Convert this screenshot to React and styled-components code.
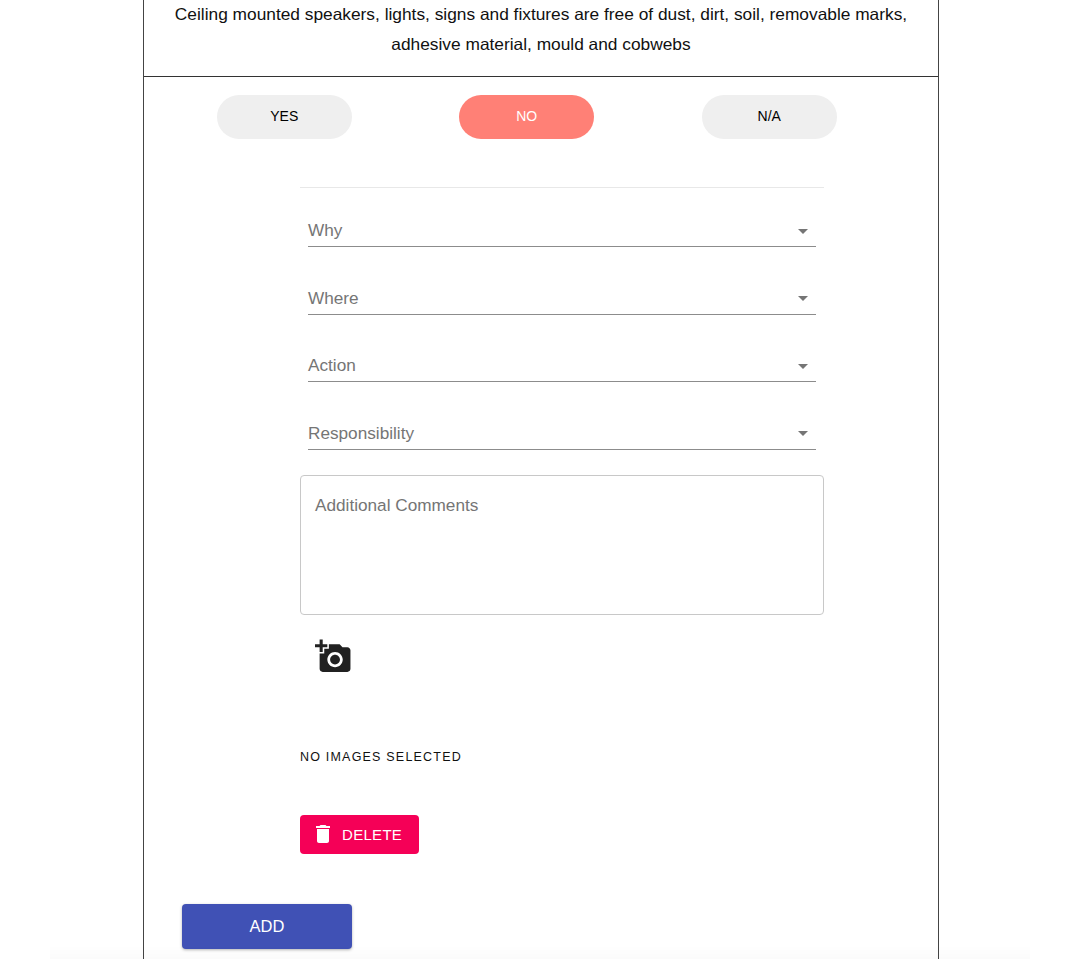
import React from 'react';
import styled, { createGlobalStyle } from 'styled-components';

const GlobalStyle = createGlobalStyle`
  html, body {
    margin: 0;
    padding: 0;
    background: #fff;
  }
  body {
    font-family: "Liberation Sans", Arial, sans-serif;
    overflow: hidden;
  }
`;

const Page = styled.div`
  height: 959px;
  padding-left: 143px;
  box-sizing: border-box;
  overflow: hidden;
`;

const Panel = styled.div`
  width: 796px;
  height: 959px;
  box-sizing: border-box;
  border-left: 1px solid #444;
  border-right: 1px solid #444;
`;

const Question = styled.div`
  height: 77px;
  box-sizing: border-box;
  border-bottom: 1px solid #333;
  text-align: center;
  font-size: 17.32px;
  line-height: 29.5px;
  color: #111;
  padding: 0 28px;
`;

const Choices = styled.div`
  display: grid;
  grid-template-columns: repeat(3, 242.5px);
  justify-items: center;
  margin: 18px 0 0 19px;
`;

const Choice = styled.button`
  width: 135px;
  height: 44px;
  border: 0;
  border-radius: 22px;
  background: ${p => (p.$active ? '#ff8076' : '#efefef')};
  color: ${p => (p.$active ? '#fff' : '#000')};
  font-family: "Liberation Sans", Arial, sans-serif;
  font-size: 14px;
  padding: 0 0 2px;
`;

const Details = styled.div`
  width: 524px;
  margin: 48px 0 0 156px;
  border-top: 1px solid #e8e8e8;
`;

const Selects = styled.div`
  display: flex;
  flex-direction: column;
  gap: 35.6px;
  padding: 27px 8px 0;
`;

const SelectField = styled.div`
  height: 32px;
  box-sizing: border-box;
  border-bottom: 1px solid #8c8c8c;
  display: flex;
  align-items: center;
  justify-content: space-between;
  font-size: 17.2px;
  color: #757575;
`;

const Arrow = styled.svg`
  width: 24px;
  height: 24px;
  fill: #757575;
  margin-right: 1px;
`;

const Comments = styled.div`
  height: 140px;
  box-sizing: border-box;
  margin-top: 25px;
  border: 1px solid #c8c8c8;
  border-radius: 4px;
  padding: 20px 14px;
  font-size: 17.2px;
  line-height: 19px;
  color: #757575;
`;

const CameraIcon = styled.svg`
  display: block;
  width: 37px;
  height: 37px;
  margin: 23px 0 0 15px;
  fill: #212121;
`;

const ImagesNote = styled.div`
  margin-top: 74px;
  font-size: 12.5px;
  line-height: 16px;
  letter-spacing: 1.2px;
  color: #111;
`;

const DeleteButton = styled.button`
  display: flex;
  align-items: center;
  gap: 7px;
  width: 119px;
  height: 39px;
  margin-top: 50px;
  padding: 0 0 0 11px;
  border: 0;
  border-radius: 4px;
  background: #f50057;
  color: #fff;
  font-family: "Liberation Sans", Arial, sans-serif;
  font-size: 15px;
  letter-spacing: 0.3px;
  svg {
    width: 24px;
    height: 24px;
    fill: #fff;
  }
`;

const AddButton = styled.button`
  display: block;
  width: 170px;
  height: 45px;
  margin: 50px 0 0 38px;
  border: 0;
  border-radius: 4px;
  background: #4051b5;
  color: #fff;
  font-family: "Liberation Sans", Arial, sans-serif;
  font-size: 16.5px;
  box-shadow: 0 1px 3px rgba(0, 0, 0, 0.3);
`;

const BottomFade = styled.div`
  position: fixed;
  left: 50px;
  right: 50px;
  bottom: 0;
  height: 14px;
  background: linear-gradient(to bottom, rgba(0, 0, 0, 0), rgba(0, 0, 0, 0.015));
  pointer-events: none;
`;

const selectLabels = ['Why', 'Where', 'Action', 'Responsibility'];

export default function App() {
  return (
    <Page>
      <GlobalStyle />
      <Panel>
        <Question>
          Ceiling mounted speakers, lights, signs and fixtures are free of dust, dirt, soil, removable marks,
          adhesive material, mould and cobwebs
        </Question>
        <Choices>
          <Choice>YES</Choice>
          <Choice $active>NO</Choice>
          <Choice>N/A</Choice>
        </Choices>
        <Details>
          <Selects>
            {selectLabels.map(label => (
              <SelectField key={label}>
                {label}
                <Arrow viewBox="0 0 24 24"><path d="M7 10l5 5 5-5z" /></Arrow>
              </SelectField>
            ))}
          </Selects>
          <Comments>Additional Comments</Comments>
          <CameraIcon viewBox="0 0 24 24">
            <path d="M3 4V1h2v3h3v2H5v3H3V6H0V4h3zm3 6V7h3V4h7l1.83 2H21c1.1 0 2 .9 2 2v12c0 1.1-.9 2-2 2H5c-1.1 0-2-.9-2-2V10h3zm7 9c2.76 0 5-2.24 5-5s-2.24-5-5-5-5 2.24-5 5 2.24 5 5 5zm-3.2-5c0 1.77 1.43 3.2 3.2 3.2s3.2-1.43 3.2-3.2-1.43-3.2-3.2-3.2-3.2 1.43-3.2 3.2z" />
          </CameraIcon>
          <ImagesNote>NO IMAGES SELECTED</ImagesNote>
          <DeleteButton>
            <svg viewBox="0 0 24 24"><path d="M6 19c0 1.1.9 2 2 2h8c1.1 0 2-.9 2-2V7H6v12zM19 4h-3.5l-1-1h-5l-1 1H5v2h14V4z" /></svg>
            DELETE
          </DeleteButton>
        </Details>
        <AddButton>ADD</AddButton>
      </Panel>
      <BottomFade />
    </Page>
  );
}
